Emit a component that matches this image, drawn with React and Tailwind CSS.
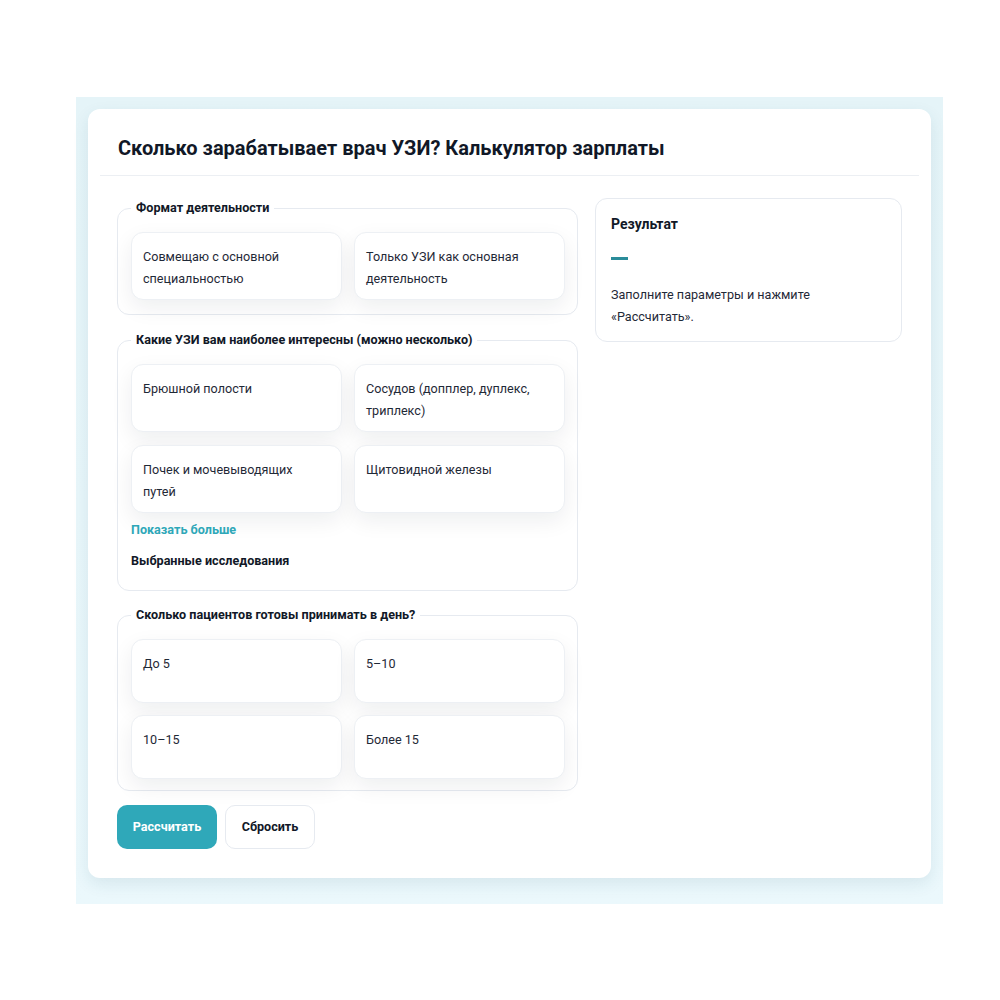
import { useState } from "react";

const formats = ["Совмещаю с основной специальностью", "Только УЗИ как основная деятельность"];
const types = [
  "Брюшной полости",
  "Сосудов (допплер, дуплекс, триплекс)",
  "Почек и мочевыводящих путей",
  "Щитовидной железы",
];
const patients = ["До 5", "5–10", "10–15", "Более 15"];

function Option({ label, tall }) {
  return (
    <div
      role="button"
      className={`bg-white rounded-[12px] border border-[#edf0f4] pl-[11px] pr-[24px] pt-[13px] pb-[9px] text-[12.6px] leading-[22px] text-[#1f2937] shadow-[0_8px_22px_rgba(15,23,42,0.07)] ${tall ? "min-h-[68px]" : "min-h-[64px]"}`}
    >
      {label}
    </div>
  );
}

function Group({ title, children, className = "" }) {
  return (
    <fieldset className={`border border-[#e6eaf0] rounded-[12px] pl-[13px] pr-[12px] ${className}`}>
      <legend className="px-[5px] text-[12.6px] leading-[20px] font-bold text-[#111827]">{title}</legend>
      {children}
    </fieldset>
  );
}

export default function App() {
  const [sel] = useState(null);

  return (
    <div className="min-h-[1000px] bg-white pt-[97px] pl-[76px]" style={{ fontFamily: "Roboto, 'Noto Sans', sans-serif" }}>
      <div className="w-[867px] pt-3 px-3 pb-[26px] bg-gradient-to-b from-[#e5f4f8] to-[#ebf8fc]">
        <div className="bg-white rounded-[12px] shadow-[0_6px_16px_rgba(30,90,110,0.10)] pb-[29px]">
          {/* header */}
          <div className="mx-3 pt-[25px] pb-[13px] pl-[18px] border-b border-[#eceff3]">
            <h1 className="text-[20px] leading-[28px] font-bold text-[#111827]">
              Сколько зарабатывает врач УЗИ? Калькулятор зарплаты
            </h1>
          </div>

          <div className="px-[29px] pt-[22px] flex gap-[17px] items-start">
            <div className="w-[461px] flex flex-col">
              <Group title="Формат деятельности" className="pb-[14px]">
                <div className="grid grid-cols-2 gap-3 mt-[14px]">
                  {formats.map((f) => (
                    <Option key={f} label={f} tall />
                  ))}
                </div>
              </Group>

              <Group title="Какие УЗИ вам наиболее интересны (можно несколько)" className="mt-[15px] pb-[19px]">
                <div className="grid grid-cols-2 gap-x-3 gap-y-[13px] mt-[14px]">
                  {types.map((f) => (
                    <Option key={f} label={f} tall />
                  ))}
                </div>
                <button type="button" className="mt-[7px] block text-[12.6px] leading-[20px] font-bold text-[#2ea7b8]">
                  Показать больше
                </button>
                <div className="mt-[11px] text-[12.6px] leading-[20px] font-bold text-[#111827]">Выбранные исследования</div>
              </Group>

              <Group title="Сколько пациентов готовы принимать в день?" className="mt-[14px] pb-[11px]">
                <div className="grid grid-cols-2 gap-3 mt-[14px]">
                  {patients.map((f) => (
                    <Option key={f} label={f} />
                  ))}
                </div>
              </Group>

              <div className="flex gap-2 mt-[14px]">
                <button type="button" className="h-[44px] w-[100px] rounded-[10px] bg-[#2fa8b9] text-white text-[12.6px] font-bold">
                  Рассчитать
                </button>
                <button type="button" className="h-[44px] w-[90px] rounded-[10px] bg-white border border-[#e6eaf0] text-[#111827] text-[12.6px] font-bold">
                  Сбросить
                </button>
              </div>
            </div>

            <div className="w-[307px] border border-[#e6eaf0] rounded-[12px] px-[15px] pt-[15px] pb-[13px]">
              <div className="text-[14px] leading-[20px] font-bold text-[#111827]">Результат</div>
              <div className="mt-[23px] w-[17px] h-[3px] bg-[#2a8c9a]" />
              <p className="mt-[24px] text-[12.6px] leading-[22px] text-[#1f2937]">
                Заполните параметры и нажмите «Рассчитать».
              </p>
              {sel}
            </div>
          </div>
        </div>
      </div>
    </div>
  );
}
